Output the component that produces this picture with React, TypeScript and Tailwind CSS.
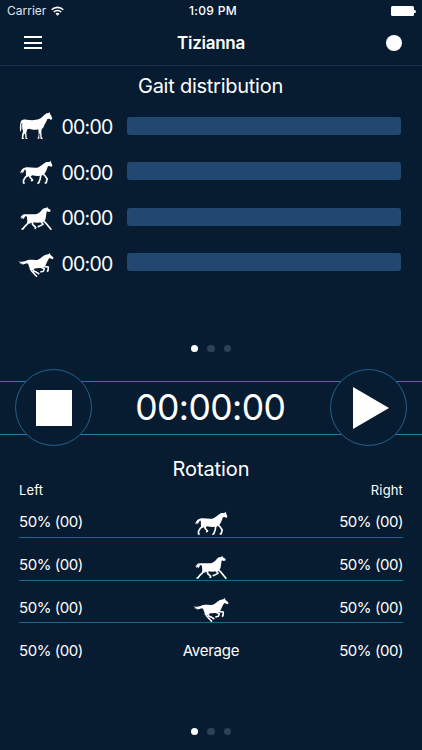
import React from 'react';

type Gait = 'stand' | 'walk' | 'trot' | 'gallop';

interface HorseIconProps {
  gait: Gait;
}

const bodies: Record<Gait, string> = {
  stand:
    'M118 20L120 26L124 33L127 41L123 45L118 41L112 42C109 51 106 55 102 62C101 67 98 70 95 72L94 82L95 96L99 102H92L91 96L90 84L88 88L88 96L88 101H82L85 96L86 86L85 73C76 76 66 74 58 71L52 73L49 82L50 98L54 102H47L46 97L45 85L41 90L40 98L43 102H35L36 90L39 78C36 70 36 62 37 56L35 53C33 62 36 72 32 80C28 74 30 60 32 50C35 44 42 43 50 44C60 46 78 46 86 43C96 39 102 28 110 25L116 24Z',
  walk:
    'M122 29L124 36L127 43L124 48L119 45L114 46C111 55 109 63 104 68L100 72C90 77 78 75 69 73L62 78L58 76L54 79C50 74 51 66 51 60L49 55C45 58 45 66 39 68L42 62L34 67C37 59 40 51 48 50C58 47 72 52 84 50C94 47 100 38 109 33L118 33Z',
  trot:
    'M112 32L114 37L121 41L122 46L117 48L111 46C109 53 109 63 107 70C104 77 98 80 92 79C86 81 77 79 71 79L60 83L54 82C56 76 54 70 54 64L51 59C47 61 48 66 42 70L43 65L37 69L39 64L34 65C37 61 39 60 42 56C47 54 52 55 55 55C65 53 75 57 84 53C94 50 95 41 103 37L109 36Z',
  gallop:
    'M120 33L121 38L128 44L131 49L127 52L119 48C114 52 113 58 110 62C108 69 105 73 100 76C91 80 82 78 76 79L67 85L59 84C61 78 56 75 56 69L52 64C44 65 42 68 35 67L37 65L28 64L31 62L25 58C35 61 40 59 47 57C59 50 72 56 84 53C92 51 96 43 105 39L115 37Z',
};

const legs: Record<Gait, string[]> = {
  stand: [],
  walk: [
    'M56 72L49 79L44 88L44 95L47 98',
    'M62 71L63 79L70 87L66 90',
    'M94 70L92 83L88 95L84 98',
    'M100 68L107 76L112 84L109 95L105 97',
  ],
  trot: [
    'M60 75L56 83L47 92L42 99L38 99',
    'M70 75L70 85L79 94L77 99',
    'M93 75L100 85L87 92L86 89',
    'M100 73L108 81L118 94L124 101',
  ],
  gallop: [
    'M63 80L65 87L76 99L81 104',
    'M69 79L71 87L80 91L88 96',
    'M91 75L103 80L100 88L91 90',
    'M99 73L115 75L114 86L111 89',
  ],
};

const HorseIcon: React.FC<HorseIconProps> = ({ gait }) => (
  <svg viewBox="24 18 108 90" className="w-[36px] h-[30px] shrink-0" fill="white">
    <g transform={gait === 'walk' || gait === 'trot' ? 'translate(-5.5 0) scale(1.045 1)' : undefined}>
      <path d={bodies[gait]} />
      {legs[gait].map((d) => (
        <path key={d} d={d} fill="none" stroke="white" strokeWidth="4.8" strokeLinejoin="round" />
      ))}
    </g>
  </svg>
);

const PageDots: React.FC = () => (
  <div className="flex justify-center gap-[9px]">
    <span className="size-[7.5px] rounded-full bg-white" />
    <span className="size-[7.5px] rounded-full bg-[#2e4257]" />
    <span className="size-[7.5px] rounded-full bg-[#2e4257]" />
  </div>
);

const StatusBar: React.FC = () => (
  <div className="h-[22px] pl-[7px] pr-[6px] grid grid-cols-3 items-center text-[12px]">
    <div className="flex items-center gap-[5px]">
      <span className="text-[#dfe6ed]">Carrier</span>
      <svg viewBox="0 0 13 10" className="w-[13px] h-[10px] -mt-px" fill="none" stroke="white" strokeWidth="1.6">
        <path d="M.7 3.7a8.3 8.3 0 0 1 11.6 0" />
        <path d="M2.8 6a5.2 5.2 0 0 1 7.4 0" />
        <path d="M4.5 7.7L6.5 9.8L8.5 7.7a2.9 2.9 0 0 0-4 0z" fill="white" stroke="none" />
      </svg>
    </div>
    <span className="pl-[3px] text-center font-medium tracking-[0.3px]">1:09 PM</span>
    <div className="flex items-center justify-end">
      <span className="w-[22.5px] h-[10px] rounded-[1.5px] bg-white" />
      <span className="w-[1.5px] h-[3px] ml-[0.5px] rounded-r-full bg-white" />
    </div>
  </div>
);

const Header: React.FC = () => (
  <header className="h-[44px] pl-[24px] pr-[20px] pb-[2px] flex items-center justify-between border-b border-[#16314c]">
    <button className="w-[18px] flex flex-col gap-[3.2px]">
      <span className="h-[2px] bg-white" />
      <span className="h-[2px] bg-white" />
      <span className="h-[2px] bg-white" />
    </button>
    <h1 className="pt-[2px] pr-[6px] text-[17px] font-semibold tracking-[-0.25px]">Tizianna</h1>
    <span className="size-[16px] rounded-full bg-white" />
  </header>
);

const gaits: Gait[] = ['stand', 'walk', 'trot', 'gallop'];

const GaitDistribution: React.FC = () => (
  <section className="h-[315px] pt-[6px] flex flex-col">
    <h2 className="pr-px text-[20px] leading-[28px] text-center tracking-[-0.25px]">Gait distribution</h2>
    <div className="mt-[11px] pl-[18px] pr-[21px]">
      {gaits.map((gait) => (
        <div key={gait} className="h-[45.6px] flex items-start">
          <HorseIcon gait={gait} />
          <span className="w-[65.5px] mt-[4px] ml-[7.5px] text-[19.5px] leading-[24px] tracking-[-0.75px]">00:00</span>
          <span className="flex-1 h-[18px] mt-[5.5px] rounded-[3px] bg-[#204870]" />
        </div>
      ))}
    </div>
    <div className="mt-auto mb-[29px]">
      <PageDots />
    </div>
  </section>
);

const Timer: React.FC = () => (
  <section className="h-[54px] px-[15px] flex items-center justify-between border-y border-[#2a78ab]">
    <button className="size-[77px] -mt-[13px] -mb-[12px] rounded-full border border-[#22618d] bg-[#081c31] flex items-center justify-center">
      <span className="size-[36px] bg-white" />
    </button>
    <span className="pr-[1.5px] text-[35.5px] leading-none tracking-[-0.6px]">00:00:00</span>
    <button className="size-[77px] -mt-[13px] -mb-[12px] rounded-full border border-[#22618d] bg-[#081c31] flex items-center justify-center">
      <svg viewBox="0 0 36 42" className="w-[36px] h-[42px] ml-[5px]" fill="white">
        <path d="M0 0L36 21L0 42Z" />
      </svg>
    </button>
  </section>
);

const rotations: Gait[] = ['walk', 'trot', 'gallop'];

const Rotation: React.FC = () => (
  <section className="flex-1 px-[19px] pt-[20px] flex flex-col">
    <h2 className="text-[20px] leading-[28px] text-center tracking-[-0.1px]">Rotation</h2>
    <div className="-mt-px flex justify-between text-[13px] leading-[16px] tracking-[0.15px]">
      <span>Left</span>
      <span>Right</span>
    </div>
    <div className="-mt-[3px] text-[15px] tracking-[-0.45px]">
      {rotations.map((gait) => (
        <div key={gait} className="h-[42.8px] grid grid-cols-[1fr_36px_1fr] items-end border-b border-[#1f6390]">
          <span className="pb-[3px]">50% (00)</span>
          <div className="-mb-px">
            <HorseIcon gait={gait} />
          </div>
          <span className="pb-[3px] text-right">50% (00)</span>
        </div>
      ))}
      <div className="h-[42px] grid grid-cols-3 items-end">
        <span className="pb-[3px]">50% (00)</span>
        <span className="pb-[3px] text-center tracking-[-0.25px]">Average</span>
        <span className="pb-[3px] text-right">50% (00)</span>
      </div>
    </div>
    <div className="mt-auto mb-[15px]">
      <PageDots />
    </div>
  </section>
);

const App: React.FC = () => {
  return (
    <div className="w-[422px] h-[750px] overflow-hidden flex flex-col bg-[#081c31] text-white font-['Inter',sans-serif]">
      <StatusBar />
      <Header />
      <GaitDistribution />
      <Timer />
      <Rotation />
    </div>
  );
};

export default App;
